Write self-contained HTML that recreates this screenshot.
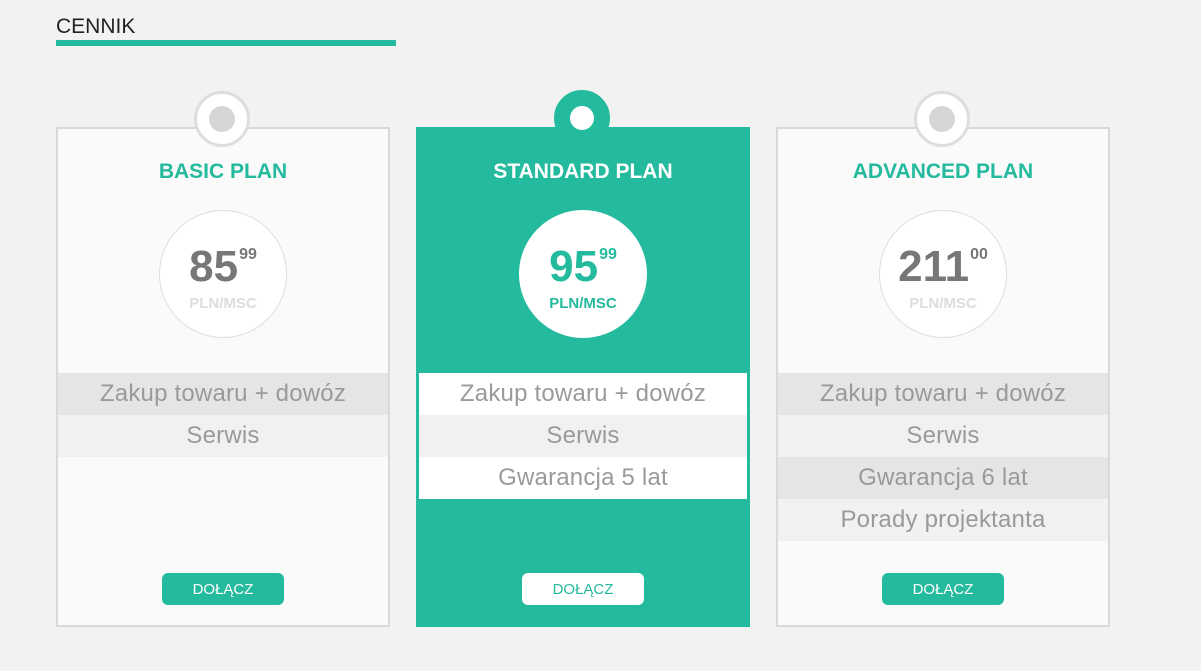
<!DOCTYPE html>
<html><head><meta charset="utf-8"><style>
*{margin:0;padding:0;box-sizing:border-box}
body{width:1201px;height:671px;background:#f2f2f2;font-family:"Liberation Sans",sans-serif;position:relative;overflow:hidden}
.h{position:absolute;left:56px;top:15px;font-size:21px;color:#222}
.ul{position:absolute;left:56px;top:40px;width:340px;height:6px;background:#24ba9e}
.card{position:absolute;top:127px;width:334px;height:500px;background:#fafafa;border:2px solid #d9d9d9}
.card.s{background:#24ba9e;border-color:#24ba9e}
.tag{position:absolute;top:-38px;left:136px;width:56px;height:56px;border-radius:50%;background:#fff;border:3px solid #ddd}
.tag i{position:absolute;left:12px;top:12px;width:26px;height:26px;border-radius:50%;background:#d6d6d6}
.s .tag{background:#24ba9e;border-color:#24ba9e;top:-39px}
.s .tag i{background:#fff;left:13px;top:13px;width:24px;height:24px}
.t{position:absolute;top:31px;left:0;right:0;text-align:center;font-size:21px;font-weight:bold;color:#24ba9e}
.s .t{color:#fff}
.pc{position:absolute;top:81px;left:101px;width:128px;height:128px;border-radius:50%;background:#fff;border:1px solid #ddd}
.s .pc{border-color:#fff}
.n{position:absolute;top:31px;left:0;right:0;text-align:center;font-size:44px;font-weight:bold;color:#777;line-height:50px}
.n sup{font-size:16px;position:relative;top:-22px;vertical-align:baseline;margin-left:1px}
.s .n{color:#24ba9e}
.u{position:absolute;top:84px;left:0;right:0;text-align:center;font-size:15px;font-weight:bold;color:#ddd}
.s .u{color:#24ba9e}
.rows{position:absolute;top:244px;left:0;right:0}
.s .rows{left:1px;right:1px}
.r{height:42px;line-height:42px;text-align:center;font-size:24px;letter-spacing:0.2px;color:#9a9a9a}
.a{background:#e5e5e5}.b{background:#f1f1f1}.w{background:#fff}
.btn{position:absolute;top:444px;left:104px;width:122px;height:32px;border-radius:6px;background:#24ba9e;color:#fff;font-size:15px;text-align:center;line-height:34px}
.s .btn{background:#fff;color:#24ba9e}
</style></head><body>
<div class="h">CENNIK</div><div class="ul"></div>

<div class="card" style="left:56px"><div class="tag"><i></i></div>
<div class="t">BASIC PLAN</div>
<div class="pc"><div class="n">85<sup>99</sup></div><div class="u">PLN/MSC</div></div>
<div class="rows"><div class="r a">Zakup towaru + dowóz</div><div class="r b">Serwis</div></div>
<div class="btn">DOŁĄCZ</div></div>

<div class="card s" style="left:416px"><div class="tag"><i></i></div>
<div class="t">STANDARD PLAN</div>
<div class="pc"><div class="n">95<sup>99</sup></div><div class="u">PLN/MSC</div></div>
<div class="rows"><div class="r w">Zakup towaru + dowóz</div><div class="r b">Serwis</div><div class="r w">Gwarancja 5 lat</div></div>
<div class="btn">DOŁĄCZ</div></div>

<div class="card" style="left:776px"><div class="tag"><i></i></div>
<div class="t">ADVANCED PLAN</div>
<div class="pc"><div class="n">211<sup>00</sup></div><div class="u">PLN/MSC</div></div>
<div class="rows"><div class="r a">Zakup towaru + dowóz</div><div class="r b">Serwis</div><div class="r a">Gwarancja 6 lat</div><div class="r b">Porady projektanta</div></div>
<div class="btn">DOŁĄCZ</div></div>
</body></html>
